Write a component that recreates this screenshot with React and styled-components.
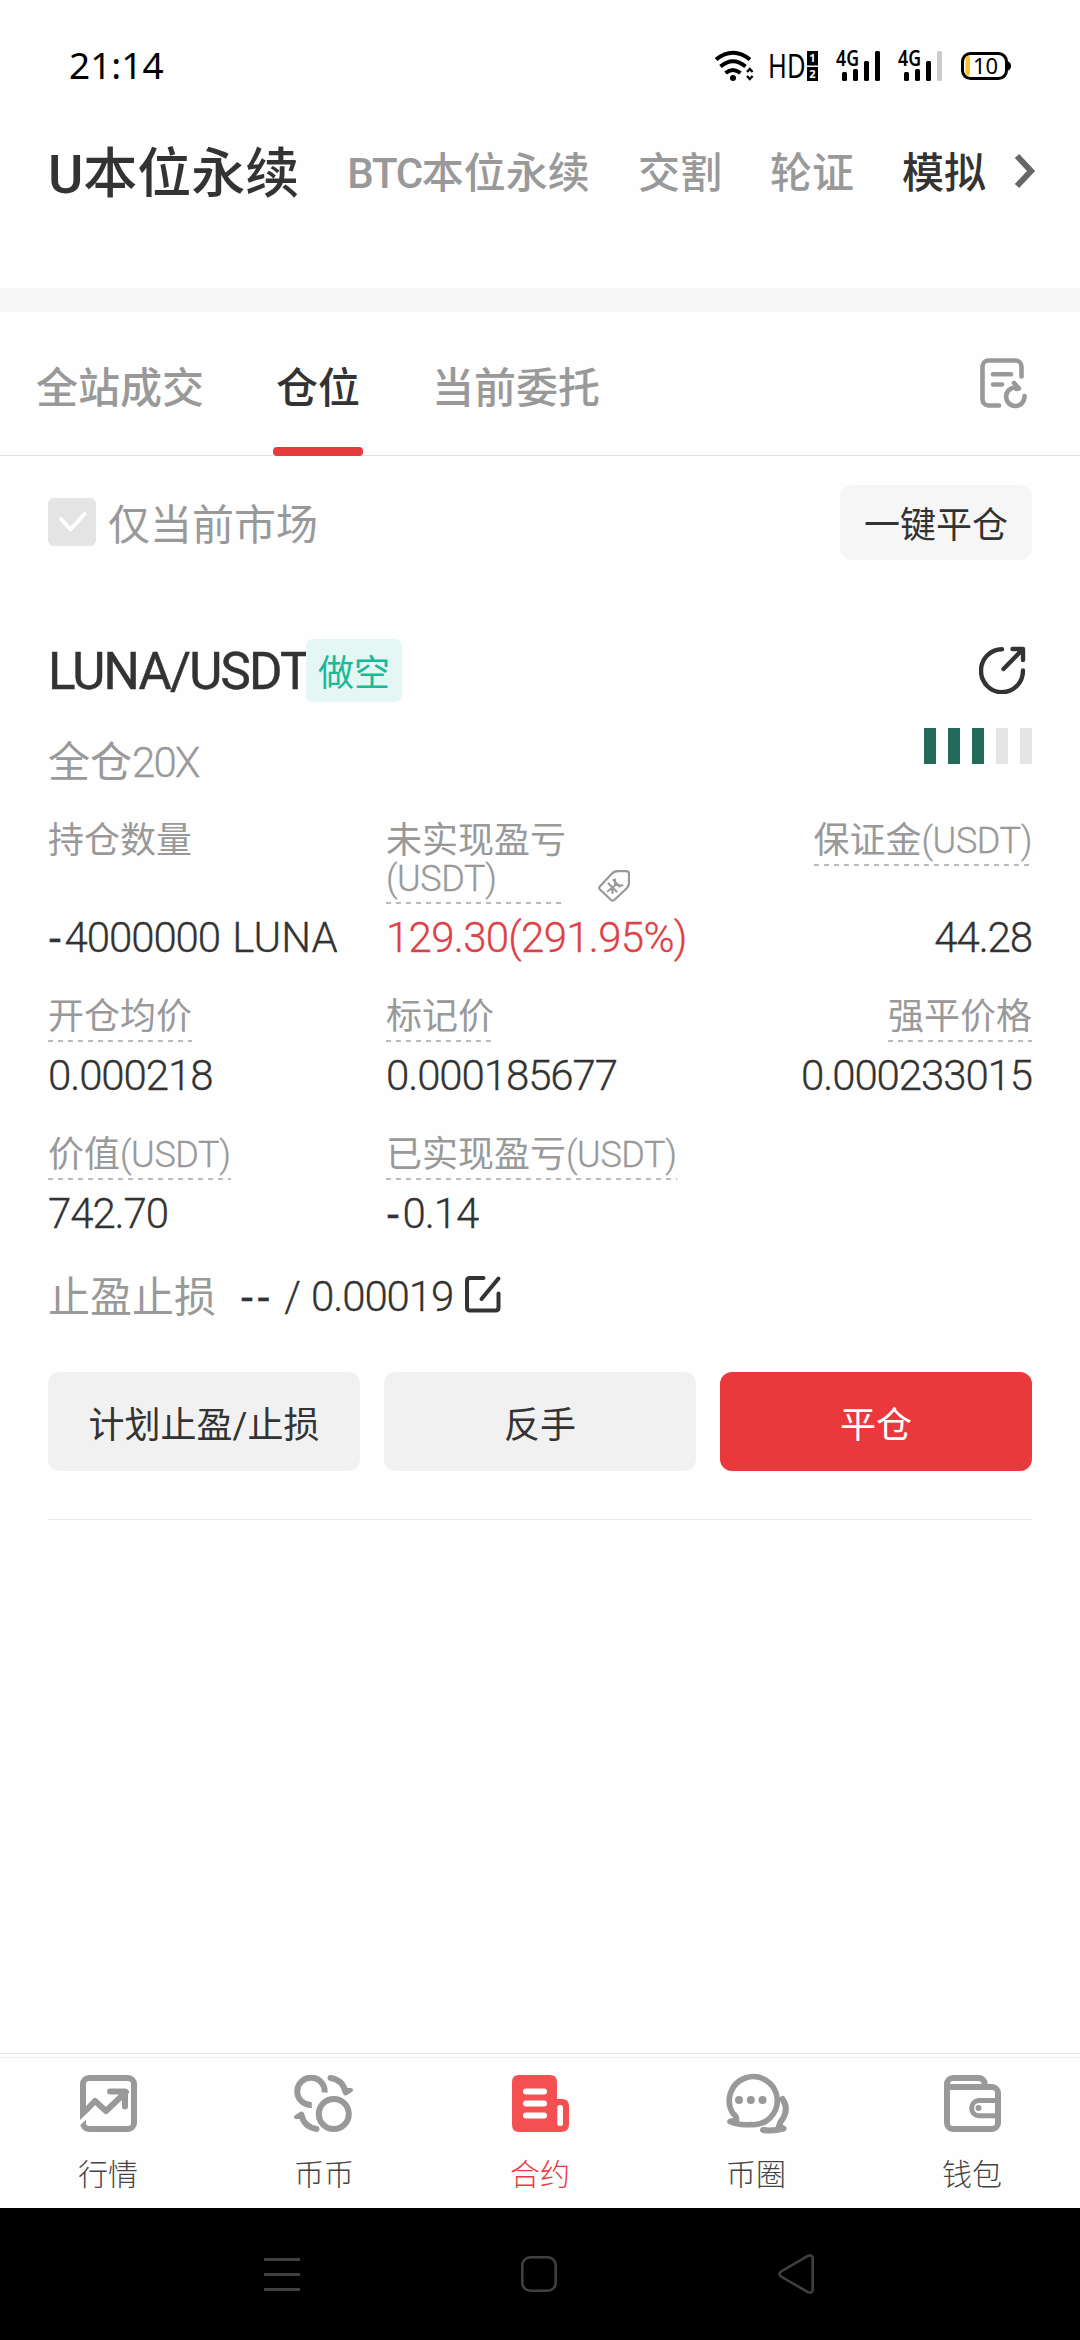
import React from 'react';
import styled, { createGlobalStyle } from 'styled-components';

const marketTabs = ['交割', '轮证'];

const orderTabs = [
    { title: '全站成交' },
    { title: '仓位', active: true },
    { title: '当前委托' },
];

const stats = [
    { label: '持仓数量', value: '-4000000', coin: ' LUNA', plain: true },
    { label: '未实现盈亏', unit: '(USDT)', value: '129.30(291.95%)', tag: true, red: true },
    { label: '保证金', unit: '(USDT)', value: '44.28', end: true },
    { label: '开仓均价', value: '0.000218' },
    { label: '标记价', value: '0.000185677' },
    { label: '强平价格', value: '0.000233015', end: true },
    { label: '价值', unit: '(USDT)', value: '742.70' },
    { label: '已实现盈亏', unit: '(USDT)', value: '-0.14' },
];

const navItems = [
    { title: '行情', icon: <MarketIcon /> },
    { title: '币币', icon: <SpotIcon /> },
    { title: '合约', icon: <ContractIcon />, active: true },
    { title: '币圈', icon: <CircleIcon /> },
    { title: '钱包', icon: <WalletIcon /> },
];

export default function App() {
    return (
        <Screen>
            <GlobalStyle />
            <StatusBar>
                <Clock>21:14</Clock>
                <StatusIcons />
            </StatusBar>

            <MarketTabs>
                <MarketTab $current>U本位永续</MarketTab>
                <MarketTab><Latin $gap={-1.3} $weight={500}>BTC</Latin>本位永续</MarketTab>
                {marketTabs.map((title) => <MarketTab key={title}>{title}</MarketTab>)}
                <MarketTab $dark>模拟</MarketTab>
                <ChevronIcon />
            </MarketTabs>
            <Band />

            <OrderTabs>
                {orderTabs.map((tab) => (
                    <OrderTab key={tab.title} $active={tab.active}>{tab.title}</OrderTab>
                ))}
                <HistoryIcon />
            </OrderTabs>

            <FilterRow>
                <Checkbox>
                    <svg width="48" height="48" fill="none" stroke="#fff" strokeWidth="4" strokeLinecap="round" strokeLinejoin="round">
                        <path d="M13 21L22.500 31.500L36.500 16" />
                    </svg>
                </Checkbox>
                <FilterLabel>仅当前市场</FilterLabel>
                <CloseAll>一键平仓</CloseAll>
            </FilterRow>

            <Position>
                <TitleRow>
                    <Pair>LUNA/USDT</Pair>
                    <Side>做空</Side>
                    <ShareIcon />
                </TitleRow>
                <LeverageRow>
                    <Leverage>全仓<Latin $gap={-1.9}>20X</Latin></Leverage>
                    <Risk>
                        {[1, 2, 3, 4, 5].map((n) => <RiskBar key={n} $on={n <= 3} />)}
                    </Risk>
                </LeverageRow>

                <Stats>
                    {stats.map((stat) => (
                        <Stat key={stat.label} $end={stat.end}>
                            <LabelLine>
                                <Label $plain={stat.plain} $narrow={stat.tag}>
                                    {stat.label}
                                    {stat.unit && <Latin $gap={-0.4}>{stat.unit}</Latin>}
                                </Label>
                                {stat.tag && <TagIcon />}
                            </LabelLine>
                            <Value $red={stat.red}>
                                <Figures text={stat.value} />
                                {stat.coin && <Latin $gap={0.1}>{stat.coin}</Latin>}
                            </Value>
                        </Stat>
                    ))}
                </Stats>

                <StopRow>
                    <StopLabel>止盈止损</StopLabel>
                    <Value><Figures text="-- / 0.00019" /></Value>
                    <EditIcon />
                </StopRow>

                <Actions>
                    <Action>计划止盈/止损</Action>
                    <Action>反手</Action>
                    <Action $primary>平仓</Action>
                </Actions>
            </Position>

            <BottomNav>
                {navItems.map((item) => (
                    <NavItem key={item.title} $active={item.active}>
                        <NavIcon>{item.icon}</NavIcon>
                        <span>{item.title}</span>
                    </NavItem>
                ))}
            </BottomNav>
            <SystemNav>
                <svg width="36" height="40" stroke="#404040" strokeWidth="3">
                    <path d="M0 5.500H36M0 20.500H36M0 35.500H36" />
                </svg>
                <svg width="36" height="40" fill="none" stroke="#404040" strokeWidth="2.600">
                    <rect x="1.300" y="3.300" width="33.400" height="33.400" rx="8" />
                </svg>
                <svg width="36" height="40" fill="none" stroke="#404040" strokeWidth="2.600" strokeLinejoin="round">
                    <path d="M3 17.500L30 1.800Q34.500 0.500 34.700 4V36Q34.500 39.500 30 38.200L3 22.500Q0 20 3 17.500Z" />
                </svg>
            </SystemNav>
        </Screen>
    );
}

// the minus signs are set wider than the digits
function Figures({ text }) {
    const rest = text.replace(/^-+/, '');
    const minus = text.slice(0, text.length - rest.length);
    return <>{minus && <Minus>{minus}</Minus>}{rest}</>;
}

function StatusIcons() {
    return (
        <svg width="300" height="56" viewBox="712 38 300 56">
            {/* wifi */}
            <g fill="none" stroke="#000" strokeWidth="4">
                <path d="M716 59.500Q733 46 750 59.500" />
                <path d="M720.500 66.500Q733 56 745.500 66.500" />
                <path d="M725.500 73Q733 67 740.500 73" />
                <path d="M747 72L749.800 69L752.600 72M747 76L749.800 79L752.600 76" strokeWidth="2.400" />
            </g>
            <circle cx="733" cy="78" r="3" />
            <text x="768" y="78" fontSize="33" textLength="37.500" lengthAdjust="spacingAndGlyphs">HD</text>
            <rect x="807" y="51" width="11" height="14.500" />
            <rect x="807" y="67" width="11" height="14" />
            <text x="812.500" y="62" fontSize="11" fontWeight="700" fill="#fff" textAnchor="middle">1</text>
            <text x="812.500" y="78.300" fontSize="11" fontWeight="700" fill="#fff" textAnchor="middle">2</text>
            <Signal x={836} weak={false} />
            <Signal x={898} weak />
            {/* battery */}
            <rect x="962.500" y="53.500" width="44" height="25" rx="8" fill="none" stroke="#000" strokeWidth="3" />
            <path d="M1007 61Q1011 62 1011 66Q1011 70 1007 71Z" />
            <rect x="965.500" y="56" width="4.500" height="19.500" rx="2" fill="#fbc02d" />
            <text x="985.500" y="73.500" fontSize="22" textAnchor="middle">10</text>
        </svg>
    );
}

function Signal({ x, weak }) {
    return (
        <g>
            <text x={x} y="65.500" fontSize="21" fontWeight="600" textLength="23" lengthAdjust="spacingAndGlyphs">4G</text>
            <rect x={x + 6} y="72" width="5" height="9" rx="1.500" />
            <rect x={x + 17} y="69" width="5" height="12" rx="1.500" />
            <rect x={x + 28} y="61" width="5" height="20" rx="1.500" />
            <rect x={x + 39} y="51" width="5" height="30" rx="1.500" fill={weak ? '#ccc' : '#000'} />
        </g>
    );
}

function ChevronIcon() {
    return (
        <Chevron width="22" height="36" fill="none" stroke="#666" strokeWidth="6">
            <path d="M3 3L17 18L3 33" />
        </Chevron>
    );
}

function HistoryIcon() {
    return (
        <Push width="48" height="51" fill="none" stroke="#999" strokeWidth="4.600" strokeLinecap="round" strokeLinejoin="round">
            <path d="M41.500 18.500V8.500A6 6 0 0 0 35.500 2.500H8.500A6 6 0 0 0 2.500 8.500V41.500A6 6 0 0 0 8.500 47.500H19" />
            <path d="M13 16.200H31M13 26.500H22" />
            <path d="M44.500 38A9.200 9.200 0 1 1 37.500 29.800M34 25L39 30.500L36.500 31" />
        </Push>
    );
}

function ShareIcon() {
    return (
        <Push width="47" height="48" fill="none" stroke="#333" strokeWidth="4.400" strokeLinecap="round" strokeLinejoin="round">
            <path d="M23 3.200A21 21.500 0 1 0 44 24.500" />
            <path d="M24.500 23L43.500 3.500M33.500 3H44V14" />
        </Push>
    );
}

function TagIcon() {
    return (
        <TagSvg width="32" height="32" fill="none" stroke="#999" strokeWidth="2.200" strokeLinecap="round" strokeLinejoin="round">
            <path d="M1.800 16.500L13.500 4Q16 1.300 20 1.200L28.500 1.200Q31 1.200 31 4V13Q31 16 28.500 18.500L16 30.200Q14.500 31.200 13 30L2 19.500Q0.500 18 1.800 16.500Z" />
            <path d="M10.500 13.500L18.500 21.500M10 21L16.500 16M15.500 10L21.500 16.500M17 14.500V9.500M18 15L24.500 15.500M14 16.500L14.500 23" />
        </TagSvg>
    );
}

function EditIcon() {
    return (
        <EditSvg width="38" height="38" fill="none" stroke="#333" strokeWidth="4" strokeLinecap="round" strokeLinejoin="round">
            <path d="M19.500 3H6Q3 3 3 6V32.500Q3 35.500 6 35.500H31.500Q34.500 35.500 34.500 32.500V18.500M34.500 3.500L17.500 24" />
        </EditSvg>
    );
}

function MarketIcon() {
    return (
        <svg width="57" height="57" fill="none" stroke="#999" strokeWidth="6" strokeLinecap="round" strokeLinejoin="round">
            <rect x="3" y="3" width="51" height="51" rx="6" />
            <path d="M3 38.500L15 26L26 36L46 17M30 16.500H45V31.500" />
            <path d="M-2 49.500L8 40" stroke="#fff" strokeWidth="3.800" />
        </svg>
    );
}

function SpotIcon() {
    return (
        <svg width="60" height="57" fill="none" stroke="#999" strokeWidth="6">
            <circle cx="39.800" cy="39" r="15" />
            <path d="M30.600 17.500A13.700 13.700 0 1 0 17.800 30" />
            <SpotArrow />
            <g transform="rotate(180 29.500 28.500)"><SpotArrow /></g>
        </svg>
    );
}

function SpotArrow() {
    return (
        <g strokeLinecap="round" strokeLinejoin="round">
            <path d="M36.500 3Q49 5 51.500 17" />
            <path d="M51 15L57 15L51.500 18.500Z" strokeWidth="4" />
        </g>
    );
}

function ContractIcon() {
    return (
        <svg width="57" height="57">
            <path d="M7 0H38Q45 0 45 7V24H50Q57 24 57 31V49Q57 57 49 57H7Q0 57 0 50V7Q0 0 7 0Z" fill="#f45052" />
            <path d="M14 16.500H32M14 28.500H32M14 40.500H32" stroke="#fff" strokeWidth="6" strokeLinecap="round" />
            <rect x="45.300" y="30" width="5.700" height="21" rx="2.500" fill="#fff" />
        </svg>
    );
}

function CircleIcon() {
    return (
        <svg width="67" height="61" fill="none" stroke="#999" strokeWidth="6" strokeLinecap="round" strokeLinejoin="round">
            <path d="M13.500 47Q14 43.500 10 40.500A24 24 0 1 1 27.500 51.500Q15 52.500 7 48.500L13.500 47" strokeWidth="5.600" />
            <path d="M59.500 26Q67 37 57.500 49L56 53L60.500 55.500Q50 58.500 40 57" />
            <g fill="#999" stroke="none">
                <circle cx="16" cy="27" r="4" />
                <circle cx="27.800" cy="27" r="4" />
                <circle cx="39.500" cy="27" r="4" />
            </g>
        </svg>
    );
}

function WalletIcon() {
    return (
        <svg width="57" height="57" fill="none" stroke="#999" strokeWidth="6">
            <path d="M3 12V48A6 6 0 0 0 9 54H48A6 6 0 0 0 54 48V18A6 6 0 0 0 48 12Z" />
            <path d="M3 13V9A6 6 0 0 1 9 3H34A6 6 0 0 1 40.500 10" />
            <path d="M54 25.500H34.500A7.700 7.700 0 0 0 34.500 40.800H54" strokeWidth="5" />
            <circle cx="34.500" cy="33" r="3" fill="#999" stroke="none" />
        </svg>
    );
}

const GlobalStyle = createGlobalStyle`
    * {
        box-sizing: border-box;
    }

    body {
        margin: 0;
        background-color: #fff;
        font-family: Roboto, "Noto Sans CJK SC", sans-serif;
    }

    svg {
        display: block;
        flex-shrink: 0;
    }
`

const Screen = styled.div`
    display: flex;
    flex-direction: column;
    width: 1080px;
    height: 2340px;
    overflow: hidden;
    background-color: #fefefe;
    color: #333;
    white-space: nowrap;
`

const Latin = styled.span`
    font-weight: ${(props) => props.$weight || 300};
    letter-spacing: ${(props) => props.$gap || 0}px;
    -webkit-text-stroke: ${(props) => (props.$weight ? 0 : '0.3px')} currentColor;
`

const Minus = styled.span`
    font-family: "Liberation Sans", sans-serif;
    letter-spacing: 2.6px;
`

const Push = styled.svg`
    margin-left: auto;
`

const Chevron = styled.svg`
    margin: 0 0 6px -20px;
`

const StatusBar = styled.div`
    display: flex;
    align-items: center;
    justify-content: space-between;
    height: 132px;
    padding: 0 68px 0 69px;
    color: #000;
    font-family: "Noto Sans", sans-serif;
`

const Clock = styled.div`
    padding-bottom: 2px;
    font-size: 37px;
    line-height: 40px;
`

const MarketTabs = styled.div`
    display: flex;
    align-items: center;
    gap: 48px;
    height: 156px;
    padding: 0 46px 73px 48px;
`

const MarketTab = styled.div`
    padding-top: ${(props) => (props.$current ? 2 : 0)}px;
    font-size: ${(props) => (props.$current ? 54 : 42)}px;
    font-weight: 500;
    line-height: 60px;
    color: ${(props) => (props.$current || props.$dark ? '#333' : '#999')};
`

const Band = styled.div`
    height: 24px;
    background-color: #f7f7f7;
`

const OrderTabs = styled.div`
    display: flex;
    align-items: center;
    gap: 66px;
    height: 144px;
    padding: 0 52px 0 33px;
    border-bottom: 1px solid #e2e2e2;
`

const OrderTab = styled.div`
    display: flex;
    flex-direction: column;
    justify-content: space-between;
    height: 144px;
    padding: 0 3px;
    font-size: 42px;
    font-weight: 500;
    line-height: 154px;
    color: ${(props) => (props.$active ? '#333' : '#999')};

    &::after {
        content: '';
        flex-shrink: 0;
        height: 9px;
        margin: -19px -3px 0;
        border-radius: 4px;
        background-color: ${(props) => (props.$active ? '#e73a3d' : 'transparent')};
    }
`

const FilterRow = styled.div`
    display: flex;
    align-items: center;
    height: 132px;
    padding: 0 48px;
`

const Checkbox = styled.div`
    width: 48px;
    height: 48px;
    border-radius: 6px;
    background-color: #e4e4e4;
`

const FilterLabel = styled.div`
    margin-left: 12px;
    padding-top: 8px;
    font-size: 42px;
    line-height: 48px;
    color: #999;
`

const CloseAll = styled.div`
    width: 192px;
    height: 75px;
    margin-left: auto;
    padding-top: 4px;
    border-radius: 12px;
    background-color: #f6f6f6;
    font-size: 36px;
    line-height: 75px;
    text-align: center;
`

const Position = styled.div`
    margin: 50px 48px 0;
    padding-bottom: 48px;
    border-bottom: 1px solid #e8e8e8;
`

const TitleRow = styled.div`
    display: flex;
    align-items: center;
    height: 64px;
    padding-right: 6px;
`

const Pair = styled.div`
    width: 258px;
    padding-top: 4px;
    font-size: 51px;
    line-height: 64px;
    letter-spacing: -1.8px;
    -webkit-text-stroke: 0.5px #333;
`

const Side = styled.div`
    width: 96px;
    height: 63px;
    padding-top: 4px;
    border-radius: 7px;
    background-color: #e5f7f5;
    font-size: 36px;
    line-height: 63px;
    text-align: center;
    color: #19b99a;
`

const LeverageRow = styled.div`
    display: flex;
    justify-content: space-between;
    height: 119px;
    padding-top: 26px;
`

const Leverage = styled.div`
    margin-top: 14px;
    font-size: 42px;
    line-height: 42px;
    color: #999;
`

const Risk = styled.div`
    display: flex;
    gap: 12px;
`

const RiskBar = styled.div`
    width: 12px;
    height: 36px;
    background-color: ${(props) => (props.$on ? '#226a59' : '#e4e4e4')};
`

const Stats = styled.div`
    display: grid;
    grid-template-columns: 338px 338px 308px;
    row-gap: 38px;
`

const Stat = styled.div`
    display: flex;
    flex-direction: column;
    align-items: ${(props) => (props.$end ? 'flex-end' : 'flex-start')};
    justify-content: space-between;
`

const LabelLine = styled.div`
    display: flex;
    align-items: flex-end;
    margin-bottom: 13px;
`

const Label = styled.div`
    width: ${(props) => (props.$narrow ? '180px' : 'auto')};
    padding: 1px 0 6px;
    font-size: 36px;
    line-height: 38px;
    color: #999;
    white-space: ${(props) => (props.$narrow ? 'normal' : 'nowrap')};
    background: ${(props) => (props.$plain ? 'none' : 'repeating-linear-gradient(90deg, #bbb 0 5px, transparent 5px 10px) left bottom / 100% 2px no-repeat')};
`

const TagSvg = styled.svg`
    margin: 0 0 2px 32px;
`

const Value = styled.div`
    font-size: 42px;
    font-weight: 300;
    line-height: 42px;
    letter-spacing: ${(props) => (props.$red ? -0.7 : -1.1)}px;
    word-spacing: 2px;
    color: ${(props) => (props.$red ? '#dc4146' : '#333')};
    -webkit-text-stroke: 0.3px currentColor;
`

const StopRow = styled.div`
    display: flex;
    align-items: flex-start;
    height: 42px;
    margin-top: 41px;
`

const StopLabel = styled.div`
    margin-right: 24px;
    padding-top: 1px;
    font-size: 42px;
    line-height: 42px;
    color: #999;
`

const EditSvg = styled.svg`
    margin: -1px 0 0 11px;
`

const Actions = styled.div`
    display: grid;
    grid-template-columns: repeat(3, 1fr);
    gap: 24px;
    margin-top: 54px;
`

const Action = styled.div`
    height: 99px;
    padding-top: 5px;
    border-radius: 12px;
    background-color: ${(props) => (props.$primary ? '#e9393c' : '#f1f1f1')};
    color: ${(props) => (props.$primary ? '#fff' : '#333')};
    font-size: 36px;
    line-height: 99px;
    text-align: center;
`

const BottomNav = styled.div`
    display: grid;
    grid-template-columns: repeat(5, 1fr);
    grid-template-rows: 4px 1fr;
    height: 155px;
    margin-top: auto;
    border-top: 1px solid #e4e4e4;

    &::before {
        content: '';
        grid-column: 1 / -1;
        height: 1px;
        margin-top: 3px;
        background-color: #efefef;
    }
`

const NavItem = styled.div`
    display: flex;
    flex-direction: column;
    align-items: center;
    gap: 23px;
    padding-top: 14px;
    font-size: 30px;
    font-weight: 300;
    line-height: 34px;
    color: ${(props) => (props.$active ? '#e9393f' : '#444')};
`

const NavIcon = styled.div`
    display: flex;
    align-items: center;
    height: 63px;
`

const SystemNav = styled.div`
    display: flex;
    align-items: center;
    justify-content: space-between;
    height: 132px;
    padding: 0 266px 0 264px;
    background-color: #000;
`
